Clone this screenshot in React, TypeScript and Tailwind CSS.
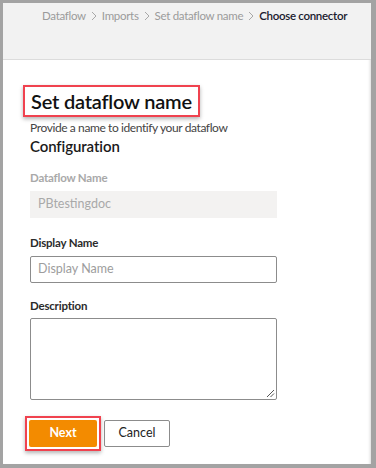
import React from "react";

const Chevron = () => (
  <svg width="6" height="10" viewBox="0 0 6 10" className="mx-[5px]" fill="none">
    <path d="M1 1 L5 5 L1 9" stroke="#a8a8a8" strokeWidth="1" />
  </svg>
);

export default function App() {
  return (
    <div
      className="w-[376px] h-[468px] bg-[#a3a3a3] pl-[3px] pt-[3px] pr-[5px] pb-[4px] overflow-hidden"
      style={{ fontFamily: "Lato, 'Noto Sans', sans-serif" }}
    >
      <div className="h-full bg-white flex flex-col shadow-[inset_-3px_0_3px_-2px_rgba(0,0,0,0.15)]">
        <div className="h-[57px] bg-[#f2f2f2] border-b border-[#dcdcdc] flex items-start pt-[6px] pl-[39px] text-[11.5px] leading-[14px] tracking-[-0.3px] whitespace-nowrap">
          <span className="text-[#9b9b9b]">Dataflow</span>
          <span className="flex items-center h-[14px]"><Chevron /></span>
          <span className="text-[#9b9b9b]">Imports</span>
          <span className="flex items-center h-[14px]"><Chevron /></span>
          <span className="text-[#9b9b9b]">Set dataflow name</span>
          <span className="flex items-center h-[14px]"><Chevron /></span>
          <span className="text-[#1b1b2f] font-semibold">Choose connector</span>
        </div>
        <div className="pl-[27px] pt-[25px] flex flex-col">
          <div className="self-start ml-[-7px] border-2 border-[#f0424f] px-[6px] h-[32px] flex items-center shadow-[0_2px_4px_rgba(0,0,0,0.3)]">
            <span className="text-[20px] font-semibold text-[#111] tracking-[-0.2px]">Set dataflow name</span>
          </div>
          <div className="mt-[3px] text-[12px] leading-[16px] tracking-[-0.4px] text-[#444]">Provide a name to identify your dataflow</div>
          <div className="text-[15px] leading-[20px] font-semibold tracking-[-0.1px] text-[#1a1a1a]">Configuration</div>

          <div className="mt-[14px] text-[11.5px] leading-[16px] font-bold tracking-[-0.2px] text-[#a9a9a9]">Dataflow Name</div>
          <div className="mt-[5px] w-[247px] h-[27px] bg-[#f3f2f1] flex items-center px-[8px] text-[12.5px] text-[#a9a9a9]">
            PBtestingdoc
          </div>

          <div className="mt-[17px] text-[11.5px] leading-[16px] font-bold tracking-[-0.2px] text-[#2b2b2b]">Display Name</div>
          <div className="mt-[5px] w-[247px] h-[27px] border border-[#8c8c8c] rounded-[2px] flex items-center px-[7px] text-[12.5px] text-[#9d9d9d]">
            Display Name
          </div>

          <div className="mt-[15px] text-[11.5px] leading-[16px] font-bold tracking-[-0.2px] text-[#2b2b2b]">Description</div>
          <div className="mt-[4px] w-[247px] h-[82px] border border-[#8c8c8c] rounded-[2px] relative">
            <svg width="10" height="10" viewBox="0 0 10 10" className="absolute right-[1px] bottom-[1px]">
              <path d="M9 2 L2 9 M9 5.5 L5.5 9" stroke="#555" strokeWidth="1" />
            </svg>
          </div>

          <div className="mt-[16px] ml-[-5px] flex items-center gap-[3px]">
            <div className="border-2 border-[#f0424f] p-[2px] shadow-[0_2px_4px_rgba(0,0,0,0.3)]">
              <div className="w-[68px] h-[27px] bg-[#f38b00] rounded-[2px] flex items-center justify-center text-white text-[12.5px] font-bold">
                Next
              </div>
            </div>
            <div className="w-[66px] h-[27px] border border-[#8c8c8c] rounded-[2px] flex items-center justify-center text-[12.5px] text-[#222]">
              Cancel
            </div>
          </div>
        </div>
      </div>
    </div>
  );
}
